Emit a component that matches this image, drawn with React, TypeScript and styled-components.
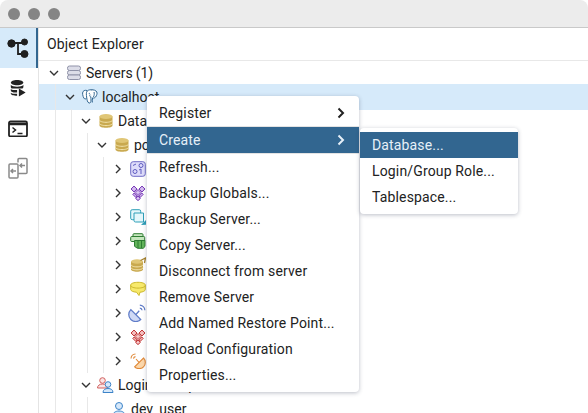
import React from 'react';
import styled, { createGlobalStyle } from 'styled-components';

const GlobalStyle = createGlobalStyle`
  html, body {
    margin: 0;
    padding: 0;
    background: #fff;
    overflow: hidden;
  }
  body {
    font-family: Roboto, "Liberation Sans", sans-serif;
    font-size: 14px;
    color: #222;
  }
`;

const Window = styled.div`
  width: 588px;
  height: 413px;
  display: flex;
  flex-direction: column;
  position: relative;
  overflow: hidden;
`;

const TitleBar = styled.div`
  height: 28px;
  flex: none;
  box-sizing: border-box;
  display: flex;
  align-items: center;
  gap: 8px;
  padding-left: 8px;
  background: #ececec;
  border-bottom: 1px solid #c9c9c9;
  border-radius: 8px 8px 0 0;
`;

const Dot = styled.span`
  width: 12px;
  height: 12px;
  border-radius: 50%;
  background: #858585;
`;

const Body = styled.div`
  flex: 1;
  display: flex;
  min-height: 0;
`;

const Sidebar = styled.div`
  width: 38px;
  flex: none;
  display: flex;
  flex-direction: column;
  border-right: 1px solid #e4e4e4;
`;

const SideButton = styled.div<{ $active?: boolean }>`
  height: 40px;
  display: flex;
  align-items: center;
  justify-content: center;
  box-sizing: border-box;
  background: ${(p) => (p.$active ? '#d6eafa' : 'transparent')};
  border-right: 2px solid ${(p) => (p.$active ? '#326690' : 'transparent')};
`;

const Main = styled.div`
  flex: 1;
  display: flex;
  flex-direction: column;
  min-width: 0;
`;

const PanelHeader = styled.div`
  height: 33px;
  flex: none;
  display: flex;
  align-items: center;
  padding-left: 8px;
  font-size: 14px;
  letter-spacing: 0.15px;
  box-sizing: border-box;
  border-bottom: 1px solid #e8e8e8;
  color: #222;
`;

const Tree = styled.div`
  flex: 1;
`;

const Row = styled.div<{ $selected?: boolean }>`
  height: ${(p) => (p.$selected ? 26 : 24)}px;
  margin: ${(p) => (p.$selected ? '-1px 0' : '0')};
  position: relative;
  display: flex;
  align-items: center;
  padding-left: 7px;
  background: ${(p) => (p.$selected ? '#d6eafa' : 'transparent')};
`;

const Indent = styled.span`
  width: 16px;
  height: 100%;
  flex: none;
  background: linear-gradient(#e8e8e8, #e8e8e8) 9px 0 / 1px 100% no-repeat;
`;

const Toggle = styled.span<{ $leaf?: boolean }>`
  width: ${(p) => (p.$leaf ? 13 : 16)}px;
  height: 16px;
  flex: none;
  display: flex;
  align-items: center;
  justify-content: center;
`;

const NodeIcon = styled.span<{ $shift?: number }>`
  width: ${(p) => 16 + (p.$shift ?? 0)}px;
  height: 16px;
  flex: none;
  margin-left: ${(p) => 4 - (p.$shift ?? 0)}px;
  display: flex;
  align-items: center;
`;

const Label = styled.span`
  margin-left: 4px;
  white-space: nowrap;
  color: #222;
`;

const Count = styled.span`
  margin-left: 3px;
  color: #222;
`;

const Menu = styled.div<{ $left: number; $top: number; $width: number }>`
  position: absolute;
  left: ${(p) => p.$left}px;
  top: ${(p) => p.$top}px;
  width: ${(p) => p.$width}px;
  box-sizing: border-box;
  padding: 4px 0;
  background: #fff;
  border-radius: 4px;
  box-shadow: 0 1px 4px rgba(30, 40, 70, 0.3);
`;

const MenuItem = styled.div<{ $active?: boolean }>`
  height: 26px;
  display: flex;
  align-items: center;
  justify-content: space-between;
  padding: 0 12px;
  font-size: 14px;
  letter-spacing: 0.15px;
  white-space: nowrap;
  background: ${(p) => (p.$active ? '#326690' : 'transparent')};
  color: ${(p) => (p.$active ? '#e6f0f8' : '#222')};
`;

const MenuDivider = styled.div`
  height: 1px;
  background: #e3e3e3;
`;

const Chevron = ({ open }: { open?: boolean }) => (
  <svg width="12" height="12" viewBox="0 0 12 12" fill="none" stroke="#333" strokeWidth="1.4">
    <path d={open ? 'M2 4l4 4 4-4' : 'M4 2l4 4-4 4'} />
  </svg>
);

const Arrow = ({ color }: { color: string }) => (
  <svg width="12" height="12" viewBox="0 0 12 12" fill="none" stroke={color} strokeWidth="2">
    <path d="M3.500 1.500L8 6l-4.500 4.500" />
  </svg>
);

const ServersIcon = () => (
  <svg width="16" height="16" viewBox="0 0 16 16" fill="#dcdde8" stroke="#8f92a8">
    <rect x="1.500" y="1" width="13" height="4.500" rx="2" />
    <rect x="1.500" y="5.500" width="13" height="4.500" rx="2" />
    <rect x="1.500" y="10" width="13" height="4.500" rx="2" />
  </svg>
);

const ElephantIcon = () => (
  <svg width="16" height="16" viewBox="0 0 16 16" fill="#fff" stroke="#336791" strokeWidth="1">
    <path d="M5 1.500C3 .9.800 1.600.600 4c-.2 2 1 5.500 2.200 6 .9.400 1.400-.9 2-1.800" />
    <path d="M11 1.200C9 .4 6.500.7 5.200 2 4 3.300 4.300 6 4.700 8.500c.3 2 .6 5 2.300 5.500 1.500.4 2-1 2-3 0-1-.2-2-.1-3" />
    <path d="M9 1c2.500-.6 5 .4 5.800 2 .7 1.600-.2 3.500-1.200 5-.8 1-2 1.200-3 .8-.2 1.500-.5 3.500-.3 4.700" />
    <path d="M8 5.500c-.5 1-.3 2 .8 2.500M12 3c.5 1.500.3 3-.5 5" fill="none" />
    <circle cx="7.300" cy="4.300" r=".6" fill="#336791" stroke="none" />
  </svg>
);

const DbIcon = () => (
  <svg width="16" height="16" viewBox="0 0 16 16">
    <path d="M1.500 3.500v9c0 1.300 2.900 2.300 6.500 2.300s6.500-1 6.500-2.300v-9z" fill="#c9a94f" />
    <ellipse cx="8" cy="3.500" rx="6.500" ry="2.400" fill="#e0c676" />
    <path d="M1.500 7c0 1.300 2.900 2.300 6.500 2.300s6.500-1 6.500-2.300M1.500 10.300c0 1.300 2.900 2.300 6.500 2.300s6.500-1 6.500-2.300" fill="none" stroke="#f3e4ae" />
  </svg>
);

const CatalogIcon = () => (
  <svg width="16" height="16" viewBox="0 0 16 16" fill="none">
    <rect x=".7" y=".7" width="14.600" height="14.600" rx="2.500" fill="#dedcfa" stroke="#6f6bc6" />
    <circle cx="5" cy="10.500" r="2" stroke="#5f5bc0" />
    <circle cx="11" cy="4.500" r="2" stroke="#5f5bc0" />
    <path d="M11 8v5M9 9l2-1M3 4.500L6 3" stroke="#5f5bc0" />
  </svg>
);

const DiamondsIcon = ({ fill, stroke }: { fill: string; stroke: string }) => (
  <svg width="16" height="16" viewBox="0 0 16 16" fill={fill} stroke={stroke}>
    <path d="M4 1l3 3-3 3-3-3zM12 1l3 3-3 3-3-3zM8 4.500l3 3-3 3-3-3zM4.200 8l3 3-1.400 1.400-3-3zM11.800 8l-3 3 1.400 1.400 3-3zM8 11l2.400 2.400L8 15.600l-2.400-2.200z" />
    <path d="M4 3.400l.6.600-.6.600-.6-.6zM12 3.400l.6.600-.6.600-.6-.6zM8 6.900l.6.600-.6.600-.6-.6zM8 12.800l.6.600-.6.600-.6-.6z" fill="#fff" stroke="none" />
  </svg>
);

const TriggerIcon = () => (
  <svg width="16" height="16" viewBox="0 0 16 16" fill="#e4f7fb" stroke="#2f9fb8">
    <rect x=".7" y=".7" width="10" height="10" rx="1.500" />
    <path d="M4 4h9.500v9H5.500A1.500 1.500 0 0 1 4 11.500z" />
    <path d="M11 16l5-.2V11z" fill="#2f9fb8" stroke="none" />
  </svg>
);

const ExtensionIcon = () => (
  <svg width="16" height="16" viewBox="0 0 16 16" fill="#c5e6bd" stroke="#2e7d32">
    <rect x="3" y=".7" width="10" height="5" rx="1" />
    <rect x=".7" y="3.500" width="14" height="5" rx="1" />
    <path d="M4.500 7.500h10.500v6l-1.800 1.800H7.500l-3-2z" fill="#62b45a" />
    <path d="M8 7.500v7.500M11.500 7.500v7.500" />
  </svg>
);

const FdwIcon = () => (
  <svg width="16" height="16" viewBox="0 0 16 16">
    <path d="M1 4.500v8c0 1.200 2.700 2.200 6 2.200s6-1 6-2.200v-8z" fill="#c9a94f" />
    <ellipse cx="7" cy="4.500" rx="6" ry="2.200" fill="#e0c676" />
    <path d="M1 7.700c0 1.200 2.700 2.200 6 2.200s6-1 6-2.200M1 10.600c0 1.200 2.700 2.200 6 2.200s6-1 6-2.200" fill="none" stroke="#f3e4ae" />
    <path d="M10.500 3.500L15.500 1l-1 5" fill="none" stroke="#a5802b" strokeWidth="1.300" />
  </svg>
);

const LanguageIcon = () => (
  <svg width="16" height="16" viewBox="0 0 16 16" fill="#f7e96b" stroke="#cdb92c">
    <path d="M.7 4c0-1.600 3.300-2.700 7.300-2.700s7.300 1.100 7.300 2.700v4.500c0 1.500-2.500 2.600-5.300 2.700L9 14.500l-2.500-3.300C3.300 11 .7 10 .7 8.500z" />
    <path d="M.7 4.500c0 1.500 3.300 2.600 7.300 2.600s7.300-1.100 7.300-2.600" fill="none" />
  </svg>
);

const DishIcon = ({ fill, stroke, flip, size = 16 }: { fill: string; stroke: string; flip?: boolean; size?: number }) => (
  <svg width={size} height={size} viewBox="0 0 16 16" fill={fill} stroke={stroke} strokeWidth="1.100">
    <g transform={flip ? 'translate(16 0) scale(-1 1)' : undefined}>
      <path d="M2.500 5a6.200 6.200 0 0 0 8.800 8.800z" />
      <path d="M7 9.300l3-3.300M10.500 1a4.800 4.800 0 0 1 4.500 4.500M10.500 3.600a2.200 2.200 0 0 1 2 2" fill="none" />
    </g>
  </svg>
);

const RolesIcon = () => (
  <svg width="18" height="16" viewBox="0 0 18 16" fill="none">
    <circle cx="6.500" cy="3.500" r="2.800" fill="#fbe3e3" stroke="#d0605f" />
    <path d="M1.500 11c0-2.500 2.200-4 5-4s5 1.500 5 4z" fill="#fbe3e3" stroke="#d0605f" />
    <circle cx="12" cy="7.500" r="2.800" fill="#d6e8fa" stroke="#3c83c8" />
    <path d="M7 15.500c0-2.800 2.200-4 5-4s5 1.200 5 4z" fill="#d6e8fa" stroke="#3c83c8" />
  </svg>
);

const UserIcon = () => (
  <svg width="16" height="16" viewBox="0 0 16 16" fill="#d6e8fa" stroke="#3c83c8">
    <circle cx="8" cy="5" r="3.500" />
    <path d="M1.500 15.500c0-3.600 2.800-5.500 6.500-5.500s6.500 1.900 6.500 5.500z" />
  </svg>
);

const ExplorerTool = () => (
  <svg width="22" height="22" viewBox="0 0 22 22" fill="#1f1f1f" stroke="#1f1f1f">
    <circle cx="4.500" cy="6.500" r="3.700" />
    <circle cx="17.500" cy="5" r="3" />
    <circle cx="17.500" cy="17" r="3.500" />
    <path d="M4.500 6H17M11 6v11h6" fill="none" strokeWidth="1.800" />
  </svg>
);

const QueryTool = () => (
  <svg width="18" height="18" viewBox="0 0 20 20" fill="#222">
    <path d="M2 4c0-1.700 3-3 7-3s7 1.300 7 3-3 3-7 3-7-1.300-7-3z" />
    <path d="M2 6.300C3 7.800 6 8.500 9 8.500s6-.7 7-2.200V9c0 .6-.4 1.100-1 1.500H2.800C2.300 10.100 2 9.600 2 9z" />
    <path d="M2 11c.6.500 1.500 1 2.700 1.300h4.300V15H5C3.200 14.500 2 13.800 2 12.800zM2 15.200c.6.500 1.800 1 3 1.300h4v2c-3.800 0-7-1-7-2.500z" />
    <path d="M11 10.500l7.500 4.500-7.500 4.500z" />
  </svg>
);

const TerminalTool = () => (
  <svg width="20" height="18" viewBox="0 -1 20 18" fill="none" stroke="#222">
    <rect x="1" y="1.500" width="18" height="15" rx="1.500" strokeWidth="1.800" />
    <path d="M1 4h18" strokeWidth="2.500" />
    <path d="M4.500 7.500l3 2.500-3 2.500" strokeWidth="1.500" />
    <path d="M9.500 13.500h5" strokeWidth="1.500" />
  </svg>
);

const DiffTool = () => (
  <svg width="20" height="22" viewBox="0 -.5 20 22" fill="none" stroke="#8a8a8a" strokeWidth="1.500">
    <rect x="1" y="6.500" width="9" height="14" rx="1" />
    <path d="M10 5V2a1 1 0 0 1 1-1h7a1 1 0 0 1 1 1v13a1 1 0 0 1-1 1h-8" />
    <path d="M8 13.500H3.500M5 11.500l-2 2 2 2M17 8h-5M14 6l-2 2 2 2" />
  </svg>
);

type TreeRow = {
  key: string;
  depth: number;
  open?: boolean;
  selected?: boolean;
  leaf?: boolean;
  shift?: number;
  icon: React.ReactNode;
  label?: string;
};

const rows: TreeRow[] = [
  { key: 'localhost', depth: 1, open: true, selected: true, icon: <ElephantIcon />, label: 'localhost' },
  { key: 'databases', depth: 2, open: true, icon: <DbIcon />, label: 'Databases' },
  { key: 'postgres', depth: 3, open: true, icon: <DbIcon />, label: 'postgres' },
  { key: 'casts', depth: 4, icon: <CatalogIcon /> },
  { key: 'catalogs', depth: 4, icon: <DiamondsIcon fill="#cdb0ec" stroke="#7b3fb8" /> },
  { key: 'triggers', depth: 4, icon: <TriggerIcon /> },
  { key: 'extensions', depth: 4, icon: <ExtensionIcon /> },
  { key: 'fdw', depth: 4, icon: <FdwIcon /> },
  { key: 'languages', depth: 4, icon: <LanguageIcon /> },
  { key: 'publications', depth: 4, shift: 2, icon: <DishIcon size={18} fill="#cfd9f5" stroke="#5f7cc8" /> },
  { key: 'schemas', depth: 4, icon: <DiamondsIcon fill="#f2b6b6" stroke="#c23b3b" /> },
  { key: 'subscriptions', depth: 4, icon: <DishIcon fill="#fbd7ab" stroke="#e08a3a" flip /> },
  { key: 'roles', depth: 2, open: true, shift: 2, icon: <RolesIcon />, label: 'Login/Group Roles' },
  { key: 'dev_user', depth: 3, leaf: true, icon: <UserIcon />, label: 'dev_user' },
];

const mainMenu = [
  'Register',
  'Create',
  'Refresh...',
  'Backup Globals...',
  'Backup Server...',
  'Copy Server...',
  'Disconnect from server',
  'Remove Server',
  'Add Named Restore Point...',
  'Reload Configuration',
  'Properties...',
];

const subMenu = ['Database...', 'Login/Group Role...', 'Tablespace...'];

export default function App() {
  return (
    <Window>
      <GlobalStyle />
      <TitleBar>
        <Dot />
        <Dot />
        <Dot />
      </TitleBar>
      <Body>
        <Sidebar>
          <SideButton $active>
            <ExplorerTool />
          </SideButton>
          <SideButton>
            <QueryTool />
          </SideButton>
          <SideButton>
            <TerminalTool />
          </SideButton>
          <SideButton>
            <DiffTool />
          </SideButton>
        </Sidebar>
        <Main>
          <PanelHeader>Object Explorer</PanelHeader>
          <Tree>
            <Row>
              <Toggle>
                <Chevron open />
              </Toggle>
              <NodeIcon>
                <ServersIcon />
              </NodeIcon>
              <Label>Servers</Label>
              <Count>(1)</Count>
            </Row>
            {rows.map((r) => (
              <Row key={r.key} $selected={r.selected}>
                {Array.from({ length: r.depth }).map((_, i) => (
                  <Indent key={i} />
                ))}
                <Toggle $leaf={r.leaf}>{!r.leaf && <Chevron open={r.open} />}</Toggle>
                <NodeIcon $shift={r.shift}>{r.icon}</NodeIcon>
                {r.label && <Label>{r.label}</Label>}
              </Row>
            ))}
          </Tree>
        </Main>
      </Body>
      <Menu $left={147} $top={96} $width={212}>
        {mainMenu.map((m) => (
          <React.Fragment key={m}>
            <MenuItem $active={m === 'Create'}>
              {m}
              {(m === 'Register' || m === 'Create') && <Arrow color={m === 'Create' ? '#e6f0f8' : '#222'} />}
            </MenuItem>
            {(m === 'Register' || m === 'Create') && <MenuDivider />}
          </React.Fragment>
        ))}
      </Menu>
      <Menu $left={360} $top={128} $width={158}>
        {subMenu.map((m) => (
          <MenuItem key={m} $active={m === 'Database...'}>
            {m}
          </MenuItem>
        ))}
      </Menu>
    </Window>
  );
}
